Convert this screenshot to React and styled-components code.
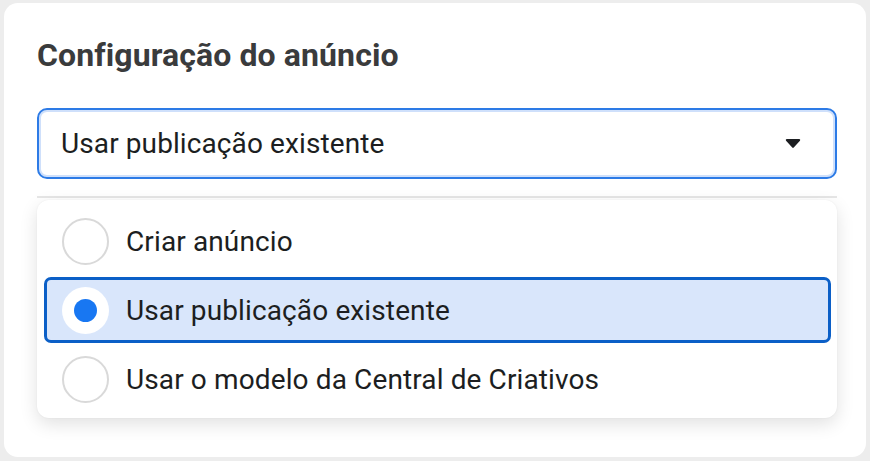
import React from "react";
import styled, { createGlobalStyle } from "styled-components";

const Global = createGlobalStyle`
  html, body { margin: 0; padding: 0; background: #ededed; }
  body { font-family: Roboto, "Liberation Sans", Arial, sans-serif; color: #1c1e21; }
  * { box-sizing: border-box; }
`;

const Page = styled.div`
  padding: 3px 4px 0 4px;
  height: 461px;
  overflow: hidden;
`;

const Card = styled.div`
  background: #fff;
  border-radius: 14px;
  height: 454px;
  padding: 32px 29px 0 33px;
  display: flex;
  flex-direction: column;
`;

const Title = styled.h2`
  margin: 0;
  font-size: 32px;
  line-height: 40px;
  font-weight: 700;
  color: #3a3b3c;
  letter-spacing: 0.1px;
`;

const Select = styled.div`
  margin-top: 33px;
  height: 71px;
  border: 2px solid #2d7be6;
  box-shadow: inset 0 0 0 2px #cfe0fb;
  border-radius: 10px;
  display: flex;
  align-items: center;
  justify-content: space-between;
  padding: 0 34px 0 22px;
  font-size: 28px;
  letter-spacing: 0.1px;
  color: #1c1e21;
`;

const Divider = styled.div`
  margin-top: 17px;
  height: 2px;
  background: #e6e6e6;
`;

const Menu = styled.div`
  margin-top: 2px;
  background: #fff;
  border-radius: 12px;
  box-shadow: 0 6px 18px rgba(0, 0, 0, 0.12), 0 0 2px rgba(0, 0, 0, 0.06);
  padding: 8px 6px 6px 7px;
  display: flex;
  flex-direction: column;
  gap: 3px;
`;

const Option = styled.div`
  height: 66px;
  display: flex;
  align-items: center;
  gap: 17px;
  padding-left: 15px;
  border-radius: 7px;
  border: 3px solid ${(p) => (p.$selected ? "#0b5fc7" : "transparent")};
  background: ${(p) => (p.$selected ? "#d9e6fb" : "transparent")};
  font-size: 28px;
  letter-spacing: 0.12px;
  color: #1c1e21;
`;

const Radio = styled.span`
  width: 47px;
  height: 47px;
  border-radius: 50%;
  flex: none;
  background: #fff;
  border: ${(p) => (p.$checked ? "none" : "2px solid #d9d9d9")};
  display: flex;
  align-items: center;
  justify-content: center;
  &::after {
    content: "";
    display: ${(p) => (p.$checked ? "block" : "none")};
    width: 23px;
    height: 23px;
    border-radius: 50%;
    background: #1877f2;
  }
`;

const Caret = () => (
  <svg width="16" height="11" viewBox="0 0 16 11">
    <path d="M1.8 1 H14.2 a1 1 0 0 1 0.75 1.65 L8.75 9.6 a1 1 0 0 1 -1.5 0 L1.05 2.65 A1 1 0 0 1 1.8 1 Z" fill="#1c1e21" />
  </svg>
);

const options = [
  "Criar anúncio",
  "Usar publicação existente",
  "Usar o modelo da Central de Criativos",
];

export default function App() {
  const selected = 1;
  return (
    <>
      <Global />
      <Page>
        <Card>
          <Title>Configuração do anúncio</Title>
          <Select>
            <span>Usar publicação existente</span>
            <Caret />
          </Select>
          <Divider />
          <Menu>
            {options.map((o, i) => (
              <Option key={o} $selected={i === selected}>
                <Radio $checked={i === selected} />
                <span>{o}</span>
              </Option>
            ))}
          </Menu>
        </Card>
      </Page>
    </>
  );
}
